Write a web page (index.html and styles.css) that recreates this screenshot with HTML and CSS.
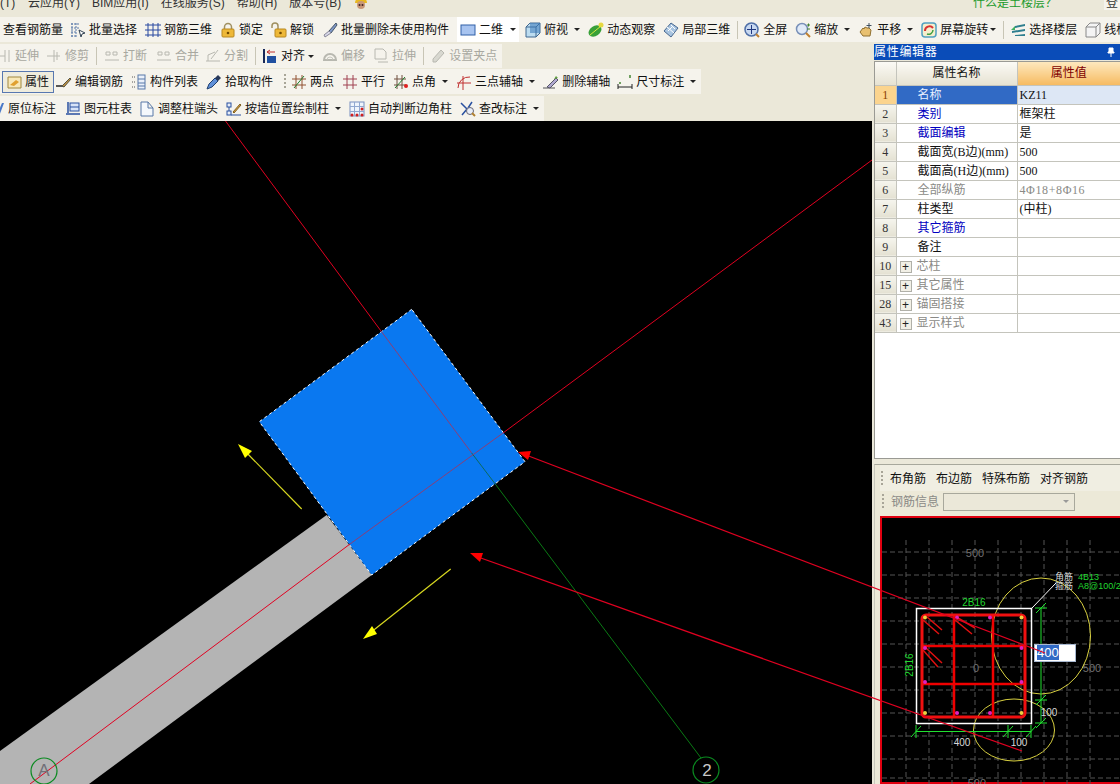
FILE: index.html
```html
<!DOCTYPE html>
<html lang="zh">
<head>
<meta charset="utf-8">
<title>属性编辑器</title>
<link rel="stylesheet" href="styles.css">
</head>
<body>
<div class="app">
  <div class="menu">
    <div class="menu-inner">
      <span class="mi first">(T)</span><span class="mi">云应用(Y)</span><span class="mi">BIM应用(I)</span><span class="mi">在线服务(S)</span><span class="mi">帮助(H)</span><span class="mi">版本号(B)</span>
      <svg class="mascot" viewBox="0 0 16 16"><path d="M2 8a6 6 0 0 1 12 0z" fill="#e8b820"/><circle cx="8" cy="10" r="4" fill="#c89878"/><circle cx="6.500" cy="10" r="1" fill="#422"/><circle cx="9.500" cy="10" r="1" fill="#422"/></svg>
      <span class="hint">什么是土楼层？</span><span class="login">登</span>
    </div>
  </div>

  <div class="bar bar1">
    <span class="it first1"><span>查看钢筋量</span></span>
    <span class="it"><svg class="i" viewBox="0 0 16 16"><path d="M1 2h9M1 6h9M1 10h6M1 14h6M2 1v14M6 1v14" stroke="#5878a8" fill="none" stroke-dasharray="2 1"/><path d="M9 8l6 3-3 1-1 3z" fill="#fff" stroke="#345"/></svg><span>批量选择</span></span>
    <span class="it"><svg class="i" viewBox="0 0 16 16"><path d="M0 3h16M0 8h16M0 13h16M3 1v14M8 1v14M13 1v14" stroke="#2848a0" fill="none"/></svg><span>钢筋三维</span></span>
    <span class="it"><svg class="i" viewBox="0 0 16 16"><path d="M4.500 8V5a3.500 3.500 0 0 1 7 0v3" stroke="#a09060" stroke-width="1.500" fill="none"/><rect x="2" y="7" width="12" height="8" rx="1" fill="#eeb838" stroke="#b88820"/><circle cx="8" cy="11" r="1.300" fill="#704800"/></svg><span>锁定</span></span>
    <span class="it"><svg class="i" viewBox="0 0 16 16"><path d="M1 6V4a3 3 0 0 1 6 0v3" stroke="#a09060" stroke-width="1.500" fill="none"/><rect x="4" y="7" width="11" height="8" rx="1" fill="#eeb838" stroke="#b88820"/><circle cx="9.500" cy="11" r="1.300" fill="#704800"/></svg><span>解锁</span></span>
    <span class="it"><svg class="i" viewBox="0 0 16 16"><path d="M14 1L7 9l2 2 6-8z" fill="#8098c8" stroke="#456"/><path d="M7 9l-5 4 1 2 6-4z" fill="#d8d8e8" stroke="#889"/></svg><span>批量删除未使用构件</span></span>
    <span class="it sel"><svg class="i" viewBox="0 0 16 16"><rect x="1" y="3" width="14" height="10" fill="#a8c4f0" stroke="#3060a8"/></svg><span>二维</span><span class="caret in"></span></span>
    <span class="it"><svg class="i" viewBox="0 0 16 16"><path d="M1 5l4-4h10v10l-4 4H1z" fill="#bcdcf0" stroke="#406890"/><path d="M1 5h10v10M11 5l4-4" stroke="#406890" fill="none"/><path d="M5 1h10v10H5z" fill="#3878b8" opacity=".55"/></svg><span>俯视</span></span><span class="caret"></span>
    <span class="it"><svg class="i" viewBox="0 0 16 16"><ellipse cx="7" cy="9" rx="7" ry="5" fill="#38a038" transform="rotate(-35 7 9)"/><circle cx="13" cy="3" r="2.500" fill="#e8d840"/><path d="M2 13L13 4" stroke="#d8e840"/></svg><span>动态观察</span></span>
    <span class="it"><svg class="i" viewBox="0 0 16 16"><path d="M8 1l7 5-7 9-7-6z" fill="#a8c4e0" stroke="#486890"/><path d="M4 5l7 6M8 3l4 4M5 9l5-5" stroke="#fff"/></svg><span>局部三维</span></span>
    <span class="sep"></span>
    <span class="it"><svg class="i" viewBox="0 0 16 16"><circle cx="7.500" cy="7.500" r="6.500" fill="#c8d8f0" stroke="#5070a8" stroke-width="1.500"/><path d="M7.500 3v9M3 7.500h9" stroke="#203880"/><path d="M12 12l3 3" stroke="#c08030" stroke-width="2"/></svg><span>全屏</span></span>
    <span class="it"><svg class="i" viewBox="0 0 16 16"><circle cx="7" cy="7" r="5.500" fill="#e0eaf8" stroke="#7890b8" stroke-width="1.500"/><path d="M11 11l4 4" stroke="#c08030" stroke-width="2"/><path d="M12 3h3M13.500 1.500v3M12 7h3" stroke="#408030"/></svg><span>缩放</span></span><span class="caret"></span>
    <span class="it"><svg class="i" viewBox="0 0 16 16"><path d="M2 10l3-4 1 1 1-2 2 1 2 0 2 2-1 6H5z" fill="#e8c070" stroke="#907030"/><path d="M11 1v5M8.500 3.500h5" stroke="#405060"/></svg><span>平移</span></span><span class="caret"></span>
    <span class="it"><svg class="i" viewBox="0 0 16 16"><rect x="1" y="1" width="14" height="14" rx="3" fill="#f4eecc" stroke="#50a0c0" stroke-width="1.500"/><path d="M4 9a4.500 4.500 0 0 1 8-3" stroke="#d83030" stroke-width="2" fill="none"/><path d="M12 8a4.500 4.500 0 0 1-6 4" stroke="#40a040" stroke-width="1.500" fill="none"/></svg><span>屏幕旋转</span></span><span class="caret tight"></span>
    <span class="sep"></span>
    <span class="it"><svg class="i" viewBox="0 0 16 16"><path d="M5 4l10-2v2L5 6zM2 9l13-2v2L2 11zM5 13l10-1v2H5z" fill="#2f7f8f"/><path d="M1 8l4-4v4z" fill="#40b060"/></svg><span>选择楼层</span></span>
    <span class="it"><svg class="i" viewBox="0 0 16 16"><path d="M1 5l4-4h10v10l-4 4H1zM1 5h10v10M11 5l4-4" stroke="#888" fill="#f4f4f4"/></svg><span>线框图</span></span>
  </div>

  <div class="work">
    <div class="left">
      <div class="bar bar2">
        <span class="it off start2"><svg class="i" viewBox="0 0 16 16"><path d="M9 2v12M13 2v12M0 8h9" stroke="#b8b8b0" fill="none"/></svg><span>延伸</span></span>
        <span class="it off n1"><svg class="i" viewBox="0 0 16 16"><path d="M8 2v12M1 8h13M11 4v8" stroke="#b8b8b0" fill="none"/></svg><span>修剪</span></span>
        <span class="sep"></span>
        <span class="it off p1"><svg class="i" viewBox="0 0 16 16"><path d="M1 12h14M2 4h4v3H2zM9 4h4v3H9z" stroke="#b8b8b0" fill="none"/></svg><span>打断</span></span>
        <span class="it off p1"><svg class="i" viewBox="0 0 16 16"><path d="M1 12h14M2 4h4v3H2zM9 4h4v3H9z" stroke="#b8b8b0" fill="none"/></svg><span>合并</span></span>
        <span class="it off n2"><svg class="i" viewBox="0 0 16 16"><path d="M1 13h14M3 13V7l7-3M13 2L6 11" stroke="#b8b8b0" fill="none"/></svg><span>分割</span></span>
        <span class="sep"></span>
        <span class="it"><svg class="i" viewBox="0 0 16 16"><path d="M2 1v14" stroke="#182858" stroke-width="2"/><path d="M5 8h9v7H5z" fill="#2050a0"/><path d="M5 4h8M5 4l3-2M5 4l3 2" stroke="#c03030" fill="none"/></svg><span>对齐</span></span><span class="caret snug"></span>
        <span class="it off"><svg class="i" viewBox="0 0 16 16"><path d="M2 12a6 6 0 0 1 12 0z" fill="none" stroke="#b8b8b0" stroke-width="2"/><path d="M5 12a3 3 0 0 1 6 0" stroke="#c8c8c0" fill="none"/></svg><span>偏移</span></span>
        <span class="it off"><svg class="i" viewBox="0 0 16 16"><path d="M2 1h8l3 3v7H2zM5 14h10" stroke="#b8b8b0" fill="none"/></svg><span>拉伸</span></span>
        <span class="sep"></span>
        <span class="it off"><svg class="i" viewBox="0 0 16 16"><path d="M3 14h3L14 5l-3-3-8 9z" fill="#d8d8d0" stroke="#b8b8b0"/></svg><span>设置夹点</span></span>
      </div>

      <div class="bar bar3">
        <span class="it active"><svg class="i" viewBox="0 0 16 16"><path d="M1 3h13v11H1z" fill="#f8e8b8" stroke="#a08840"/><path d="M3 11l6-5 3 2-5 4z" fill="#e0a030"/></svg><span>属性</span></span>
        <span class="it"><svg class="i" viewBox="0 0 16 16"><path d="M0 12h8" stroke="#222" stroke-width="1.500"/><path d="M6 12l8-8 1 1-7 8z" fill="#c09040" stroke="#554"/></svg><span>编辑钢筋</span></span>
        <span class="it"><svg class="i" viewBox="0 0 16 16"><path d="M1 3h3M1 8h3M1 13h3" stroke="#555" stroke-dasharray="1 1"/><rect x="7" y="1" width="7" height="14" fill="#eaf0fa" stroke="#5878a8"/><path d="M7 5h7M7 9h7M7 12h7" stroke="#5878a8"/></svg><span>构件列表</span></span>
        <span class="it"><svg class="i" viewBox="0 0 16 16"><path d="M1 15l2-5 6-6 3 3-6 6z" fill="#6090d8" stroke="#204070"/><path d="M9 4l3-3 3 3-3 3z" fill="#283858"/></svg><span>拾取构件</span></span>
        <span class="grip"></span>
        <span class="it"><svg class="i" viewBox="0 0 16 16"><path d="M1 5h14M1 11h14M5 1v14M11 1v14" stroke="#905030" fill="none"/><path d="M3 14L13 2" stroke="#208030"/></svg><span>两点</span></span>
        <span class="it"><svg class="i" viewBox="0 0 16 16"><path d="M1 5h14M1 11h14M5 1v14M11 1v14" stroke="#a04050" fill="none"/></svg><span>平行</span></span>
        <span class="it"><svg class="i" viewBox="0 0 16 16"><path d="M1 5h12M1 11h12M4 1v14M9 1v14" stroke="#705040" fill="none"/><path d="M2 14L12 3" stroke="#208030"/><circle cx="13" cy="12" r="2" fill="#e02020"/></svg><span>点角</span></span><span class="caret"></span>
        <span class="it"><svg class="i" viewBox="0 0 16 16"><path d="M1 9h14M7 2v14" stroke="#c03030"/><path d="M2 14a11 11 0 0 1 12-11" stroke="#c03030" fill="none"/></svg><span>三点辅轴</span></span><span class="caret"></span>
        <span class="it"><svg class="i" viewBox="0 0 16 16"><path d="M0 14h12" stroke="#888" stroke-width="1.500"/><path d="M4 13l9-9 2 2-8 8z" fill="#b0a8d0" stroke="#556"/><path d="M11 5l2-3 2 2z" fill="#60a040"/></svg><span>删除辅轴</span></span>
        <span class="it n1"><svg class="i" viewBox="0 0 16 16"><path d="M1 10v5M15 10v5M1 13h14" stroke="#222" fill="none"/><rect x="2" y="8" width="2" height="2" fill="#70a060"/><rect x="12" y="1" width="2" height="3" fill="#70a060"/></svg><span>尺寸标注</span></span><span class="caret"></span>
      </div>

      <div class="bar bar4">
        <span class="it start4"><svg class="i" viewBox="0 0 16 16"><path d="M10 15l2-5 3-8-2 0-4 9z" fill="#4878c8"/></svg><span>原位标注</span></span>
        <span class="it p1"><svg class="i" viewBox="0 0 16 16"><path d="M3 1v11M1 13h14" stroke="#2850a0" stroke-width="1.500" fill="none"/><rect x="5" y="2" width="9" height="8" fill="#d8e4f8" stroke="#2850a0"/><path d="M5 6h9" stroke="#2850a0"/></svg><span>图元柱表</span></span>
        <span class="it n1"><svg class="i" viewBox="0 0 16 16"><path d="M2 1h7v6h5v8H2z" fill="#f4f8fc" stroke="#5878a8"/><path d="M9 1l5 6" stroke="#5878a8"/></svg><span>调整柱端头</span></span>
        <span class="it"><svg class="i" viewBox="0 0 16 16"><rect x="1" y="2" width="4" height="4" fill="#e8eef8" stroke="#2850a0"/><rect x="1" y="10" width="4" height="4" fill="#e8eef8" stroke="#2850a0"/><path d="M3 6v4M5 14h10" stroke="#2850a0"/><path d="M7 11L14 3l1 1-7 8z" fill="#d8a040" stroke="#806020"/></svg><span>按墙位置绘制柱</span></span><span class="caret"></span>
        <span class="it"><svg class="i" viewBox="0 0 16 16"><rect x="1" y="1" width="14" height="14" fill="#eef4fc" stroke="#7890c0"/><path d="M5.500 1v14M10.500 1v14M1 5.500h14M1 10.500h14" stroke="#90a8d0"/><circle cx="3" cy="14" r="1.500" fill="#d02020"/><circle cx="8" cy="14" r="1.500" fill="#d02020"/><circle cx="13" cy="14" r="1.500" fill="#d02020"/><circle cx="13" cy="8" r="1.500" fill="#d02020"/></svg><span>自动判断边角柱</span></span>
        <span class="it"><svg class="i" viewBox="0 0 16 16"><path d="M1 2l6 6-5 6M12 1L8 7" stroke="#2850a0" stroke-width="1.500" fill="none"/><circle cx="10" cy="10" r="3.500" fill="#e8eef8" stroke="#667"/><path d="M12 12l3 3" stroke="#b08030" stroke-width="2"/></svg><span>查改标注</span></span><span class="caret"></span>
      </div>

      <svg class="canvas" viewBox="0 121 872 663" aria-label="绘图区">
        <polygon class="wall" points="326.700,515 371.700,575 89,784 0,784 0,751"/>
        <polygon class="column" points="411.700,309.300 259.300,421.700 371.700,575 525,461.700"/>
        <line class="axis" x1="225.500" y1="121" x2="381" y2="331"/>
        <line class="axis-over" x1="381" y1="331" x2="471.700" y2="453"/>
        <line class="green-over" x1="471.700" y1="453" x2="496" y2="485"/>
        <line class="green" x1="496" y1="485" x2="701" y2="758"/>
        <line class="axis" x1="872" y1="160" x2="503" y2="433"/>
        <line class="axis-over" x1="503" y1="433" x2="350" y2="544"/>
        <line class="axis" x1="350" y1="544" x2="30" y2="784"/>
        <line class="yellow" x1="301.700" y1="509" x2="243" y2="449"/>
        <polygon class="yellow-fill" points="238,444 252,451 245,458"/>
        <line class="yellow" x1="450.700" y1="569" x2="370" y2="633"/>
        <polygon class="yellow-fill" points="363,639 372,626 377,634"/>
        <circle class="bubble" cx="44" cy="771" r="13"/>
        <text class="bubble-a" x="44" y="776">A</text>
        <circle class="bubble" cx="706" cy="770" r="13"/>
        <text class="bubble-t" x="707" y="776">2</text>
      </svg>
    </div>

    <aside class="panel">
      <div class="title"><span>属性编辑器</span><svg class="pin" viewBox="0 0 10 10"><path d="M3 1h4v4h1v1H2V5h1zM5 6v4" stroke="#fff" fill="#fff"/></svg></div>
      <div class="props">
        <table class="grid">
          <colgroup><col class="c1"><col class="c2"><col class="c3"></colgroup>
          <tr class="head"><th></th><th>属性名称</th><th class="hv">属性值</th></tr>
          <tr class="cur"><td class="n">1</td><td class="k">名称</td><td class="v">KZ11</td></tr>
          <tr><td class="n">2</td><td class="k blue">类别</td><td class="v">框架柱</td></tr>
          <tr><td class="n">3</td><td class="k blue">截面编辑</td><td class="v">是</td></tr>
          <tr><td class="n">4</td><td class="k">截面宽(B边)(mm)</td><td class="v">500</td></tr>
          <tr><td class="n">5</td><td class="k">截面高(H边)(mm)</td><td class="v">500</td></tr>
          <tr><td class="n">6</td><td class="k gray">全部纵筋</td><td class="v gray wide">4Φ18+8Φ16</td></tr>
          <tr><td class="n">7</td><td class="k">柱类型</td><td class="v">(中柱)</td></tr>
          <tr><td class="n">8</td><td class="k blue">其它箍筋</td><td class="v"></td></tr>
          <tr><td class="n">9</td><td class="k">备注</td><td class="v"></td></tr>
          <tr><td class="n">10</td><td class="k gray"><span class="plus">+</span>芯柱</td><td class="v"></td></tr>
          <tr><td class="n">15</td><td class="k gray"><span class="plus">+</span>其它属性</td><td class="v"></td></tr>
          <tr><td class="n">28</td><td class="k gray"><span class="plus">+</span>锚固搭接</td><td class="v"></td></tr>
          <tr><td class="n">43</td><td class="k gray"><span class="plus">+</span>显示样式</td><td class="v"></td></tr>
        </table>
      </div>
      <div class="editor">
        <div class="etools"><span class="grip"></span><span>布角筋</span><span>布边筋</span><span>特殊布筋</span><span>对齐钢筋</span></div>
        <div class="einfo"><span class="grip"></span><span class="gray">钢筋信息</span><span class="select"><span class="caret"></span></span></div>
        <div class="preview">
          <svg class="pv" viewBox="882 518 238 266" aria-label="截面">
            <path class="pgrid" d="M882 552H1120M882 575H1120M882 598H1120M882 621H1120M882 644H1120M882 667H1120M882 690H1120M882 713H1120M882 736H1120M882 759H1120M882 778H1120M906 540V784M929 540V784M952 540V784M975 540V784M998 540V784M1021 540V784M1044 540V784M1067 540V784M1090 540V784"/>
            <text class="pgray" x="975" y="557">500</text>
            <text class="pgray" x="1092" y="672">500</text>
            <text class="pgray" x="976" y="672">0</text>
            <text class="pgray" x="975" y="787">-500</text>
            <ellipse class="yell" cx="1041" cy="636" rx="49.500" ry="58"/>
            <ellipse class="yell" cx="1014" cy="730" rx="40.500" ry="31"/>
            <rect class="conc" x="916.500" y="608.500" width="115" height="115"/>
            <path class="leader" d="M1032 608L1056 583"/>
            <path class="bar-red" d="M954 615V717M993 615V717M922 646H1025M922 684H1025"/>
            <rect class="stir" x="922" y="615" width="103" height="102" rx="4"/>
            <path class="hook" d="M923 620L939 634M927 617L942 630M955 620L972 634M958 618L975 628M923 650L938 667M926 648L942 663"/>
            <g class="pink"><circle cx="957" cy="617.500" r="2"/><circle cx="990" cy="617.500" r="2"/><circle cx="1021.500" cy="648" r="2"/><circle cx="1021.500" cy="682" r="2"/><circle cx="925" cy="682" r="2"/><circle cx="925" cy="648" r="2"/><circle cx="957" cy="713" r="2"/><circle cx="990" cy="713" r="2"/></g>
            <g class="gold"><circle cx="925" cy="617.500" r="2"/><circle cx="1021.500" cy="617.500" r="2"/><circle cx="925" cy="713" r="2"/><circle cx="1021.500" cy="713" r="2"/></g>
            <path class="dim" d="M916 731.500H1031M1041 608V723M911 737L921 726M1003 737L1013 726M1026 737L1036 726M1036 613L1046 603M1036 705L1046 695M1036 728L1046 718M916 725V738M1008 725V738M1031 725V738M1035 608H1047M1035 700H1047M1035 723H1047"/>
            <text class="pwhite" x="962" y="746">400</text>
            <text class="pwhite" x="1019" y="746">100</text>
            <text class="pwhite" x="1049" y="716">100</text>
            <text class="pgreen" x="974" y="606">2B16</text>
            <text class="pgreen" transform="translate(913 665) rotate(-90)" x="0" y="0">2B16</text>
            <text class="pwhite small" x="1064" y="580">角筋</text>
            <text class="pgreen small start" x="1078" y="580">4B13</text>
            <text class="pwhite small" x="1064" y="589">箍筋</text>
            <text class="pgreen small start" x="1078" y="589">A8@100/200</text>
          </svg>
          <div class="edit"><span class="edit-sel">400</span></div>
        </div>
      </div>
    </aside>
  </div>

  <svg class="overlay" viewBox="0 0 1120 784" aria-hidden="true">
    <line class="red" x1="526" y1="455" x2="1045" y2="653"/>
    <polygon class="red-fill" points="518,452 531,451 528,460"/>
    <line class="red" x1="478" y1="557" x2="1022" y2="751"/>
    <polygon class="red-fill" points="470,553 483,553 480,562"/>
  </svg>
</div>
</body>
</html>
```

FILE: styles.css
```css
* { box-sizing: border-box; }
html, body { margin: 0; padding: 0; }
body {
  width: 1120px;
  height: 784px;
  overflow: hidden;
  background: #ebe8d9;
  font: 12px/14px "Liberation Sans", "Noto Sans CJK SC", sans-serif;
  color: #111;
}
.app { position: relative; width: 1120px; height: 784px; overflow: hidden; display: flex; flex-direction: column; }

/* menu */
.menu { height: 17px; overflow: hidden; flex: none; color: #333; }
.menu-inner { display: flex; align-items: center; gap: 12px; margin-top: -4px; height: 14px; white-space: nowrap; }
.mi.first { width: 16px; }
.mascot { width: 16px; height: 16px; flex: none; }
.hint { margin-left: auto; color: #1a9a2a; margin-right: 47px; }
.login { background: #f5f3ec; color: #333; padding-left: 2px; width: 16px; margin-left: -12px; }

/* toolbars */
.bar { display: flex; align-items: center; gap: 8px; white-space: nowrap; flex: none; overflow: hidden; background: #f5f3ec; }
.it { display: flex; align-items: center; gap: 4px; flex: none; }
.i { width: 16px; height: 16px; flex: none; margin-right: -1px; }
.off { color: #a8a8a0; }
.caret { width: 6px; height: 3px; flex: none; margin-left: -2px; border-left: 3px solid transparent; border-right: 3px solid transparent; border-top: 3px solid #222; }
.caret.in { margin-left: 3px; }
.caret.tight { margin-left: -6px; }
.caret.snug { margin-left: -5px; }
.sep { width: 1px; height: 18px; background: #c8c5b5; flex: none; margin: 0 -2px 0 -1px; }
.grip { width: 2px; height: 16px; flex: none; margin: 0 -3px 0 3px; background: repeating-linear-gradient(#a8a598 0 2px, transparent 2px 4px); }
.p1 { margin-left: 1px; }
.n1 { margin-left: -1px; }
.n2 { margin-left: -2px; }

.bar1 { height: 25px; padding-left: 3px; width: 1120px; }
.first1 { margin-right: -1px; }
.sel { background: #fff; height: 25px; padding: 0 3px; margin-right: -2px; }

.work { flex: 1; display: flex; min-height: 0; }
.left { width: 872px; flex: none; display: flex; flex-direction: column; padding-top: 2px; }
.bar2 { height: 24px; width: fit-content; padding-right: 5px; margin-bottom: 1px; }
.start2 { margin-left: -4px; }
.bar3 { height: 25px; width: fit-content; padding: 0 5px 0 2px; margin-bottom: 2px; }
.active { height: 22px; padding: 0 4px; margin-right: -6px; border: 1px solid #5878b0; background: #efecdd; gap: 3px; }
.bar4 { height: 25px; width: fit-content; padding-right: 5px; }
.start4 { margin-left: -11px; }

.canvas { display: block; width: 872px; height: 663px; background: #000; flex: none; }
.wall { fill: #b4b4b4; }
.column { fill: #0a78f0; stroke: #fff; stroke-width: 1; stroke-dasharray: 3 3; }
.axis { stroke: #e00020; stroke-width: 1; }
.axis-over { stroke: #8a3f78; stroke-width: 1; }
.green { stroke: #0a7a14; stroke-width: 1; }
.green-over { stroke: #0a6a60; stroke-width: 1; }
.yellow { stroke: #d8d820; stroke-width: 1.200; }
.yellow-fill { fill: #ffff00; }
.bubble { fill: none; stroke: #0a8a20; stroke-width: 1.200; }
.bubble-a { fill: #707078; font-size: 17px; text-anchor: middle; }
.bubble-t { fill: #c8c8c8; font-size: 17px; text-anchor: middle; }

/* right panel */
.panel { width: 248px; flex: none; display: flex; flex-direction: column; padding-top: 2px; padding-left: 2px; }
.title { height: 16px; background: #0a4cb8; color: #fff; display: flex; align-items: center; justify-content: space-between; letter-spacing: .7px; padding-right: 4px; flex: none; }
.pin { width: 10px; height: 10px; }
.props { height: 398px; background: #fff; border: 1px solid #9a9a94; border-right: 0; margin-top: 1px; flex: none; }
.grid { border-collapse: collapse; table-layout: fixed; width: 245px; font-family: "Liberation Serif", "Noto Sans CJK SC", serif; }
.c1 { width: 21px; }
.c2 { width: 121px; }
.c3 { width: 103px; }
.grid th, .grid td { height: 19px; padding: 0; border: 1px solid #c4c4bc; overflow: hidden; white-space: nowrap; font-weight: 400; }
.grid tr:first-child th { border-top: 0; }
.grid th:first-child, .grid td:first-child { border-left: 0; }
.grid th:last-child, .grid td:last-child { border-right: 0; }
.grid .head th { height: 23px; background: linear-gradient(#fbfaf5, #e6e2d2); text-align: center; }
.grid .head .hv { background: linear-gradient(#fde8be, #f6bb62); color: #800000; }
.n { background: linear-gradient(#f6f5ee, #e4e1d2); text-align: center; color: #333; }
.k { padding-left: 21px !important; }
.v { padding-left: 2px !important; }
.blue { color: #0000c0; }
.gray { color: #8a8a86; }
.wide { letter-spacing: .6px; }
.cur .n { background: #fbd48e; color: #8a4000; }
.cur .k { background: #316ac5; color: #e8f0ff; }
.cur .v { background: #dde7f5; }
.plus { display: inline-flex; align-items: center; justify-content: center; width: 12px; height: 12px; font-family: "Liberation Sans", sans-serif; line-height: 10px; border: 1px solid #b0b0a8; background: #f2f0e6; color: #222; margin: 0 5px 0 -18px; vertical-align: -1px; }

.editor { margin-top: 5px; flex: 1; min-height: 0; border-top: 1px solid #a8a89c; border-left: 1px solid #c8c8bc; padding-left: 5px; display: flex; flex-direction: column; background: #ece9d8; }
.etools { height: 26px; display: flex; align-items: center; gap: 10px; background: #f0eee2; padding-left: 1px; padding-top: 2px; flex: none; }
.etools .grip { margin: 0 -3px 0 0; }
.einfo { height: 21px; margin-bottom: 4px; display: flex; align-items: center; gap: 7px; padding-left: 1px; flex: none; }
.einfo .grip { margin: 0 0 0 1px; }
.select { width: 132px; height: 18px; margin-left: -3px; border: 1px solid #a8a89c; background: #ebe8d9; display: flex; align-items: center; justify-content: flex-end; padding-right: 5px; }
.select .caret { border-top-color: #999; }
.preview { position: relative; flex: 1; min-height: 0; border: 2px solid #e00010; border-right: 0; background: #000; }
.pv { display: block; width: 238px; height: 266px; }
.pgrid { stroke: #555; stroke-width: 1; stroke-dasharray: 5 3; fill: none; }
.pgray { fill: #707070; font-size: 11px; text-anchor: middle; }
.pwhite { fill: #d8d8d8; font-size: 10px; text-anchor: middle; }
.pgreen { fill: #20d830; font-size: 10px; text-anchor: middle; }
.start { text-anchor: start; }
.small { font-size: 9px; }
.yell { fill: none; stroke: #d8d040; stroke-width: 1; }
.conc { fill: none; stroke: #fff; stroke-width: 1.500; }
.leader { stroke: #fff; stroke-width: 1; }
.bar-red { stroke: #f00000; stroke-width: 2.500; fill: none; }
.stir { fill: none; stroke: #f01010; stroke-width: 3; }
.hook { stroke: #e01010; stroke-width: 1.500; fill: none; }
.pink { fill: #e020c0; }
.gold { fill: #f0d040; }
.dim { stroke: #20e030; stroke-width: 1; fill: none; }
.edit { position: absolute; left: 152px; top: 126px; width: 42px; height: 18px; background: #fff; border: 1px solid #a8b8d0; padding-left: 2px; font-size: 13px; line-height: 15px; }
.edit-sel { background: #316ac5; color: #fff; }

.overlay { position: absolute; left: 0; top: 0; width: 1120px; height: 784px; pointer-events: none; }
.red { stroke: #e00020; stroke-width: 1.200; }
.red-fill { fill: #ff0000; }
```
